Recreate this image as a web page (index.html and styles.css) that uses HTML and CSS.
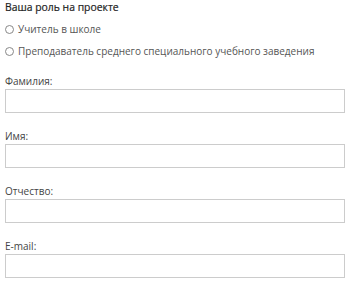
FILE: index.html
```html
<!DOCTYPE html>
<html lang="ru">
<head>
  <meta charset="UTF-8" />
  <meta name="viewport" content="width=device-width, initial-scale=1.0" />
  <title>Анкета</title>
  <link rel="stylesheet" href="styles.css">
</head>
<body>
  <form class="form">
    <div class="role">
      <div class="role-title">Ваша роль на проекте</div>
      <label class="radio"><input type="radio" name="role" value="school"> Учитель в школе</label>
      <label class="radio"><input type="radio" name="role" value="college"> Преподаватель среднего специального учебного заведения</label>
    </div>

    <div class="field">
      <label for="lastname">Фамилия:</label>
      <input id="lastname" type="text">
    </div>
    <div class="field">
      <label for="firstname">Имя:</label>
      <input id="firstname" type="text">
    </div>
    <div class="field">
      <label for="middlename">Отчество:</label>
      <input id="middlename" type="text">
    </div>
    <div class="field">
      <label for="email">E-mail:</label>
      <input id="email" type="email">
    </div>
  </form>
</body>
</html>
```

FILE: styles.css
```css
body {
  margin: 0;
  padding: 0 5px;
  font-family: "Open Sans", Arial, sans-serif;
  background: #fff;
  color: #444;
}
.form {
  display: flex;
  flex-direction: column;
}
.role {
  display: flex;
  flex-direction: column;
  gap: 8px;
}
.role-title {
  font-size: 10.4px;
  color: #1e1e1e;
  line-height: 14px;
  -webkit-text-stroke: 0.2px #1e1e1e;
}
.radio {
  display: flex;
  align-items: center;
  font-size: 10px;
  color: #555;
  line-height: 14px;
}
/* простой кружок вместо системного радио */
.radio input {
  appearance: none;
  -webkit-appearance: none;
  width: 9px;
  height: 9px;
  border: 1px solid #888;
  border-radius: 50%;
  box-sizing: border-box;
  margin: 0 4px 0 0;
  background: #fff;
}
.field {
  display: flex;
  flex-direction: column;
  margin-top: 16px;
}
.field label {
  font-size: 10px;
  color: #444;
  line-height: 14px;
  margin-bottom: 1px;
}
.field input {
  height: 24px;
  box-sizing: border-box;
  border: 1px solid #ccc;
  margin: 0;
  padding: 0 6px;
}
```
